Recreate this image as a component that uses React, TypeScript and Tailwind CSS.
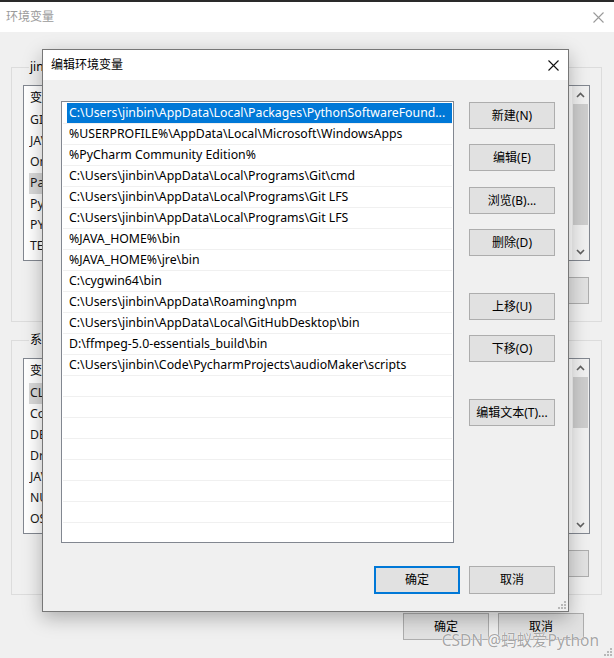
import React from 'react';

const FONT = { fontFamily: '"Noto Sans", "Noto Sans CJK SC", sans-serif' };

const paths = [
  'C:\\Users\\jinbin\\AppData\\Local\\Packages\\PythonSoftwareFound...',
  '%USERPROFILE%\\AppData\\Local\\Microsoft\\WindowsApps',
  '%PyCharm Community Edition%',
  'C:\\Users\\jinbin\\AppData\\Local\\Programs\\Git\\cmd',
  'C:\\Users\\jinbin\\AppData\\Local\\Programs\\Git LFS',
  'C:\\Users\\jinbin\\AppData\\Local\\Programs\\Git LFS',
  '%JAVA_HOME%\\bin',
  '%JAVA_HOME%\\jre\\bin',
  'C:\\cygwin64\\bin',
  'C:\\Users\\jinbin\\AppData\\Roaming\\npm',
  'C:\\Users\\jinbin\\AppData\\Local\\GitHubDesktop\\bin',
  'D:\\ffmpeg-5.0-essentials_build\\bin',
  'C:\\Users\\jinbin\\Code\\PycharmProjects\\audioMaker\\scripts',
];

const userVars = [
  ['GIT_LFS_PATH', 'C:\\Users\\jinbin\\AppData\\Local\\Programs\\Git LFS'],
  ['JAVA_HOME', 'C:\\Program Files\\Java\\jdk1.8.0_201'],
  ['OneDrive', 'C:\\Users\\jinbin\\OneDrive'],
  ['Path', 'C:\\Users\\jinbin\\AppData\\Local\\Packages\\PythonSoftwareFound...'],
  ['PyCharm Community Edition', 'C:\\Program Files\\JetBrains\\PyCharm Community Edition\\bin;'],
  ['PYTHONUSERBASE', 'C:\\Users\\jinbin\\AppData\\Roaming\\Python'],
  ['TEMP', '%USERPROFILE%\\AppData\\Local\\Temp'],
];

const sysVars = [
  ['CLASSPATH', '.;%JAVA_HOME%\\lib;%JAVA_HOME%\\lib\\tools.jar'],
  ['ComSpec', 'C:\\Windows\\system32\\cmd.exe'],
  ['DEFAULT_CA_NR', 'CA2'],
  ['DriverData', 'C:\\Windows\\System32\\Drivers\\DriverData'],
  ['JAVA_HOME', 'C:\\Program Files\\Java\\jdk1.8.0_201'],
  ['NUMBER_OF_PROCESSORS', '8'],
  ['OS', 'Windows_NT'],
];

function Chevron({ up }: { up?: boolean }) {
  return (
    <svg width="9" height="6" viewBox="0 0 9 6" className="text-[#606060]">
      <polyline
        points={up ? '1,5 4.5,1.5 8,5' : '1,1 4.5,4.5 8,1'}
        fill="none"
        stroke="currentColor"
        strokeWidth="1.6"
      />
    </svg>
  );
}

function WinButton({ label, className = '' }: { label: string; className?: string }) {
  return (
    <div
      className={`flex h-[27px] w-[86px] shrink-0 items-center justify-center border border-[#adadad] bg-[#e1e1e1] text-[12px] text-black ${className}`}
    >
      {label}
    </div>
  );
}

function VarList({ rows, selected, thumbH }: { rows: string[][]; selected: number; thumbH: number }) {
  return (
    <div className="flex h-[176px] border border-[#828790] bg-white">
      <div className="flex min-w-0 flex-1 flex-col overflow-hidden">
        <div className="flex h-[24px] shrink-0 items-center whitespace-nowrap text-[12px] text-black">
          <span className="w-[200px] shrink-0 pl-[6px]">变量</span>
          <span>值</span>
        </div>
        {rows.map(([k, v], i) => (
          <div
            key={k}
            className={`mx-[5px] flex h-[21px] shrink-0 items-center overflow-hidden whitespace-nowrap text-[12.3px] text-[#1a1a1a] ${
              i === selected ? 'bg-[#d9d9d9]' : ''
            }`}
          >
            <span className="w-[195px] shrink-0 pl-[1px]">{k}</span>
            <span className="truncate">{v}</span>
          </div>
        ))}
      </div>
      <div className="flex w-[17px] shrink-0 flex-col items-center bg-[#f0f0f0]">
        <div className="flex h-[17px] items-center justify-center">
          <Chevron up />
        </div>
        <div className="w-full flex-1 px-[1px]">
          <div className="mt-[1px] w-full bg-[#cdcdcd]" style={{ height: thumbH }} />
        </div>
        <div className="flex h-[17px] items-center justify-center">
          <Chevron />
        </div>
      </div>
    </div>
  );
}

function Group({
  title,
  rows,
  selected,
  thumbH,
  className = '',
}: {
  title: string;
  rows: string[][];
  selected: number;
  thumbH: number;
  className?: string;
}) {
  return (
    <fieldset className={`min-w-0 border border-[#dcdcdc] px-[11px] pb-[17px] ${className}`}>
      <legend className="ml-[6px] px-[1px] text-[12px] leading-[16px] text-black">{title}</legend>
      <div className="mt-[10px]">
        <VarList rows={rows} selected={selected} thumbH={thumbH} />
      </div>
      <div className="mt-[16px] flex justify-end gap-[9px] pr-[1px]">
        <WinButton label="新建(W)..." />
        <WinButton label="编辑(I)..." />
        <WinButton label="删除(L)" />
      </div>
    </fieldset>
  );
}

function Grip() {
  return (
    <svg width="10" height="10" viewBox="0 0 10 10">
      {[
        [8, 2],
        [8, 5],
        [5, 5],
        [8, 8],
        [5, 8],
        [2, 8],
      ].map(([x, y]) => (
        <rect key={`${x}-${y}`} x={x - 1} y={y - 1} width="2" height="2" fill="#b8b8b8" />
      ))}
    </svg>
  );
}

function EditDialog() {
  const rows = Array.from({ length: 21 }, (_, i) => paths[i] ?? '');
  return (
    <div className="absolute left-[42px] top-[49px] flex h-[563px] w-[527px] flex-col border border-[#777777] bg-[#f0f0f0] shadow-[0_6px_18px_rgba(0,0,0,0.28)]">
      <div className="flex h-[30px] shrink-0 items-center justify-between bg-white pl-[8px] pr-[9px]">
        <span className="text-[12px] text-black">编辑环境变量</span>
        <svg width="11" height="11" viewBox="0 0 11 11">
          <path d="M0.5 0.5 L10.5 10.5 M10.5 0.5 L0.5 10.5" stroke="#111" strokeWidth="1.1" />
        </svg>
      </div>
      <div className="flex flex-1 flex-col pl-[18px] pr-[13px] pt-[21px]">
        <div className="flex gap-[15px]">
          <div className="flex h-[442px] w-[393px] flex-col overflow-hidden border border-[#828790] bg-white px-[1px] pt-[1px]">
            {rows.map((p, i) => (
              <div key={i} className="flex h-[21px] shrink-0 items-stretch border-b border-[#f0f0f0]">
                <div
                  className={`ml-[4px] flex flex-1 items-center whitespace-nowrap pl-[2px] text-[12.3px] ${
                    i === 0 ? 'bg-[#0078d7] text-white' : 'text-black'
                  }`}
                >
                  {p}
                </div>
              </div>
            ))}
          </div>
          <div className="flex flex-col pt-[1px]">
            <WinButton label="新建(N)" />
            <WinButton label="编辑(E)" className="mt-[15px]" />
            <WinButton label="浏览(B)..." className="mt-[16px]" />
            <WinButton label="删除(D)" className="mt-[15px]" />
            <WinButton label="上移(U)" className="mt-[37px]" />
            <WinButton label="下移(O)" className="mt-[15px]" />
            <WinButton label="编辑文本(T)..." className="mt-[37px]" />
          </div>
        </div>
        <div className="mt-[23px] flex justify-end gap-[9px]">
          <div className="flex h-[28px] w-[86px] items-center justify-center border-2 border-[#0078d7] bg-[#e1e1e1] text-[12px] text-black">
            确定
          </div>
          <WinButton label="取消" className="h-[28px]" />
        </div>
      </div>
      <div className="absolute bottom-[1px] right-[1px]">
        <Grip />
      </div>
    </div>
  );
}

export default function App() {
  return (
    <div className="relative h-[658px] w-[614px] overflow-hidden bg-[#f0f0f0]" style={FONT}>
      <div className="h-[2px] bg-[#2a2a2a]" />
      <div className="flex h-[30px] items-center justify-between bg-white pl-[6px] pr-[10px]">
        <span className="text-[12px] text-[#9a9a9a]">环境变量</span>
        <svg width="11" height="11" viewBox="0 0 11 11">
          <path d="M0.5 0.5 L10.5 10.5 M10.5 0.5 L0.5 10.5" stroke="#9a9a9a" strokeWidth="1.1" />
        </svg>
      </div>
      <div className="flex flex-col pl-[11px] pr-[12px] pt-[27px]">
        <Group title="jinbin 的用户变量(U)" rows={userVars} selected={3} thumbH={121} />
        <Group title="系统变量(S)" rows={sysVars} selected={0} thumbH={51} className="mt-[10px]" />
        <div className="mr-[18px] mt-[18px] flex justify-end gap-[9px]">
          <WinButton label="确定" />
          <WinButton label="取消" />
        </div>
      </div>
      <div className="absolute bottom-[1px] right-[1px]">
        <Grip />
      </div>
      <EditDialog />
      <div className="absolute bottom-[6px] right-[15px] text-[15.5px] text-[#9a9a9a]/90 [text-shadow:0_0_1px_#fff,0_0_1px_#fff]">
        CSDN @蚂蚁爱Python
      </div>
    </div>
  );
}
